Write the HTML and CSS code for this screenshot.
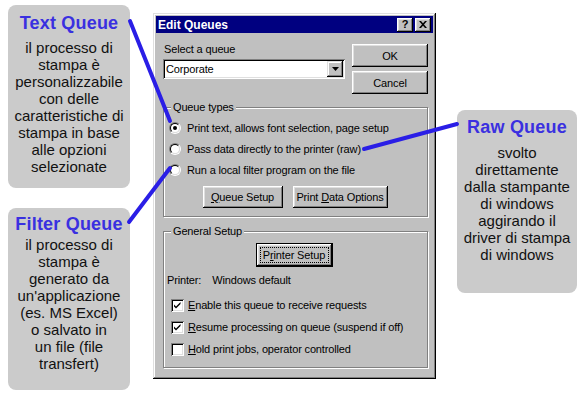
FILE: index.html
```html
<!DOCTYPE html>
<html lang="it">
<head>
<meta charset="utf-8">
<title>Edit Queues</title>
<link rel="stylesheet" href="styles.css">
</head>
<body>
<div class="canvas">
  <section class="note note-text">
    <h2 class="note-title">Text Queue</h2>
    <p class="note-body">il processo di<br>stampa è<br>personalizzabile<br>con delle<br>caratteristiche di<br>stampa in base<br>alle opzioni<br>selezionate</p>
  </section>

  <section class="note note-filter">
    <h2 class="note-title">Filter Queue</h2>
    <p class="note-body">il processo di<br>stampa è<br>generato da<br>un'applicazione<br>(es. MS Excel)<br>o salvato in<br>un file (file<br>transfert)</p>
  </section>

  <section class="note note-raw">
    <h2 class="note-title">Raw Queue</h2>
    <p class="note-body">svolto<br>direttamente<br>dalla stampante<br>di windows<br>aggirando il<br>driver di stampa<br>di windows</p>
  </section>

  <div class="window">
    <div class="titlebar">
      <span class="title-text">Edit Queues</span>
      <span class="tb-btns">
        <span class="tb-btn tb-help">?</span>
        <span class="tb-btn tb-close"><svg width="8" height="7" viewBox="0 0 8 7"><path d="M0 0h2l2 2.2L6 0h2L5 3.5 8 7H6L4 4.8 2 7H0l3-3.5z" fill="#000"/></svg></span>
      </span>
    </div>

    <div class="dialog-body">
      <div class="top-row">
        <div class="queue-select">
          <div class="field-label">Select a queue</div>
          <div class="combo">
            <span class="combo-value">Corporate</span>
            <span class="combo-btn"><svg width="7" height="4" viewBox="0 0 7 4"><path d="M0 0h7L3.5 4z" fill="#000"/></svg></span>
          </div>
        </div>
        <div class="actions">
          <button class="btn btn-side"><span>OK</span></button>
          <button class="btn btn-side"><span>Cancel</span></button>
        </div>
      </div>

      <fieldset class="group group-types">
        <legend>Queue types</legend>
        <div class="group-inner">
          <div class="radio-row"><span class="radio checked"><span class="radio-in"></span></span><span>Print text, allows font selection, page setup</span></div>
          <div class="radio-row"><span class="radio"><span class="radio-in"></span></span><span>Pass data directly to the printer (raw)</span></div>
          <div class="radio-row"><span class="radio"><span class="radio-in"></span></span><span>Run a local filter program on the file</span></div>
          <div class="btn-row">
            <button class="btn btn-queue"><span><u>Q</u>ueue Setup</span></button>
            <button class="btn btn-data"><span>Print <u>D</u>ata Options</span></button>
          </div>
        </div>
      </fieldset>

      <fieldset class="group group-general">
        <legend>General Setup</legend>
        <div class="group-inner">
          <button class="btn btn-default"><span class="focus"><span>P<u>r</u>inter Setup</span></span></button>
          <div class="printer-line"><span>Printer:</span><span>Windows default</span></div>
          <div class="check-row check-first"><span class="check on"><svg width="13" height="13" viewBox="0 0 13 13"><path d="M3 5.5l2 2 4.5-4.5v2L5 9.5l-2-2z" fill="#000"/></svg></span><span><u>E</u>nable this queue to receive requests</span></div>
          <div class="check-row"><span class="check on"><svg width="13" height="13" viewBox="0 0 13 13"><path d="M3 5.5l2 2 4.5-4.5v2L5 9.5l-2-2z" fill="#000"/></svg></span><span><u>R</u>esume processing on queue (suspend if off)</span></div>
          <div class="check-row"><span class="check"></span><span><u>H</u>old print jobs, operator controlled</span></div>
        </div>
      </fieldset>
    </div>
  </div>

  <svg class="leaders" width="585" height="398" viewBox="0 0 585 398">
    <g stroke="#2a1ee6" stroke-width="4" stroke-linecap="round">
      <line x1="130" y1="21" x2="170" y2="121"/>
      <line x1="364" y1="149" x2="457" y2="124"/>
      <line x1="129" y1="222" x2="170" y2="168"/>
    </g>
  </svg>
</div>
</body>
</html>
```

FILE: styles.css
```css
* { box-sizing: border-box; }

html, body {
  margin: 0;
  padding: 0;
  background: #fff;
}

body {
  width: 585px;
  height: 398px;
  overflow: hidden;
  font-family: "Liberation Sans", Arial, sans-serif;
}

.canvas {
  position: relative;
  width: 585px;
  height: 398px;
}

/* annotation callouts */
.note {
  position: absolute;
  background: #cbcbcb;
  border-radius: 8px;
  text-align: center;
  color: #111;
  display: flex;
  flex-direction: column;
  align-items: center;
}

.note-title {
  margin: 0;
  font-size: 18px;
  line-height: 20px;
  font-weight: bold;
  color: #3a30e0;
  letter-spacing: 0.2px;
}

.note-body {
  margin: 0;
  font-size: 15px;
  line-height: 17px;
}

.note-text { left: 8px; top: 5px; width: 122px; height: 183px; padding-top: 8px; }
.note-text .note-title { margin-bottom: 6px; }

.note-filter { left: 8px; top: 208px; width: 122px; height: 182px; padding-top: 6px; }
.note-filter .note-title { margin-bottom: 2px; }

.note-raw { left: 457px; top: 110px; width: 120px; height: 183px; padding-top: 7px; }
.note-raw .note-title { margin-bottom: 7px; }

/* leader lines */
.leaders {
  position: absolute;
  left: 0;
  top: 0;
  pointer-events: none;
}

/* dialog window */
.window {
  position: absolute;
  left: 153px;
  top: 13px;
  width: 283px;
  height: 366px;
  padding: 3px;
  background: #c0c0c0;
  color: #000;
  font-size: 11px;
  letter-spacing: -0.15px;
  box-shadow: inset -1px -1px #000, inset 1px 1px #dfdfdf, inset -2px -2px #808080, inset 2px 2px #fff;
}

.titlebar {
  height: 17px;
  background: #000080;
  color: #fff;
  display: flex;
  align-items: center;
  justify-content: space-between;
  padding: 0 2px 0 2px;
}

.title-text {
  font-size: 12px;
  font-weight: bold;
  letter-spacing: 0;
}

.tb-btns {
  display: flex;
  gap: 2px;
}

.tb-btn {
  width: 16px;
  height: 14px;
  background: #c0c0c0;
  color: #000;
  display: flex;
  align-items: center;
  justify-content: center;
  font-weight: bold;
  font-size: 11px;
  line-height: 1;
  box-shadow: inset -1px -1px #000, inset 1px 1px #fff, inset -2px -2px #808080, inset 2px 2px #dfdfdf;
}

.dialog-body {
  padding: 10px 5px 0 7px;
}

.top-row {
  display: flex;
  gap: 7px;
}

.queue-select {
  width: 182px;
}

.field-label {
  line-height: 13px;
  padding-left: 1px;
}

.combo {
  margin-top: 3px;
  height: 20px;
  display: flex;
  align-items: center;
  background: #fff;
  padding: 2px;
  box-shadow: inset 1px 1px #808080, inset -1px -1px #fff, inset 2px 2px #000, inset -2px -2px #dfdfdf;
}

.combo-value {
  flex: 1;
  padding-left: 1px;
  line-height: 16px;
}

.combo-btn {
  width: 16px;
  height: 16px;
  background: #c0c0c0;
  display: flex;
  align-items: center;
  justify-content: center;
  box-shadow: inset -1px -1px #000, inset 1px 1px #dfdfdf, inset -2px -2px #808080, inset 2px 2px #fff;
}

.actions {
  width: 76px;
  margin-top: 1px;
  display: flex;
  flex-direction: column;
  gap: 4px;
}

.btn {
  display: flex;
  align-items: center;
  justify-content: center;
  padding: 0;
  border: none;
  background: #c0c0c0;
  color: #000;
  font-family: "Liberation Sans", Arial, sans-serif;
  font-size: 11px;
  letter-spacing: -0.15px;
  white-space: nowrap;
  box-shadow: inset -1px -1px #000, inset 1px 1px #fff, inset -2px -2px #808080, inset 2px 2px #dfdfdf;
}

.btn-side { height: 23px; width: 76px; }

/* group boxes */
.group {
  margin: 0;
  padding: 0;
  min-width: 0;
  border: 1px solid #808080;
  box-shadow: 1px 1px 0 #fff, inset 1px 1px 0 #fff;
}

.group legend {
  margin-left: 7px;
  padding: 0 2px;
  line-height: 13px;
  background: #c0c0c0;
}

.group-types {
  margin-top: 7px;
}

.group-types .group-inner {
  padding: 3px 6px 8px 5px;
}

.radio-row {
  height: 21px;
  display: flex;
  align-items: center;
  gap: 6px;
}

.radio {
  width: 12px;
  height: 12px;
  border-radius: 50%;
  border: 1px solid;
  border-color: #808080 #fff #fff #808080;
  display: flex;
}

.radio-in {
  flex: 1;
  border-radius: 50%;
  border: 1px solid;
  border-color: #000 #dfdfdf #dfdfdf #000;
  background: #fff;
  display: flex;
  align-items: center;
  justify-content: center;
}

.radio.checked .radio-in::after {
  content: "";
  width: 4px;
  height: 4px;
  border-radius: 50%;
  background: #000;
}

.btn-row {
  display: flex;
  justify-content: center;
  gap: 10px;
  margin-top: 6px;
}

.btn-queue { width: 80px; height: 22px; }
.btn-data { width: 95px; height: 22px; }

.group-general {
  margin-top: 8px;
}

.group-general .group-inner {
  padding: 5px 6px 7px 3px;
  display: flex;
  flex-direction: column;
}

.btn-default {
  align-self: center;
  width: 77px;
  height: 24px;
  padding: 4px;
  box-shadow: inset 0 0 0 1px #000, inset -2px -2px #000, inset 2px 2px #fff, inset -3px -3px #808080, inset 3px 3px #dfdfdf;
}

.focus {
  flex: 1;
  align-self: stretch;
  display: flex;
  align-items: center;
  justify-content: center;
  border: 1px dotted #000;
}

.printer-line {
  margin-top: 7px;
  line-height: 13px;
  display: flex;
  gap: 11px;
}

.check-row {
  height: 22px;
  display: flex;
  align-items: center;
  gap: 4px;
  padding-left: 4px;
}

.check-first { margin-top: 7px; }

.check {
  width: 13px;
  height: 13px;
  background: #fff;
  display: flex;
  box-shadow: inset 1px 1px #808080, inset -1px -1px #fff, inset 2px 2px #000, inset -2px -2px #dfdfdf;
}
```
